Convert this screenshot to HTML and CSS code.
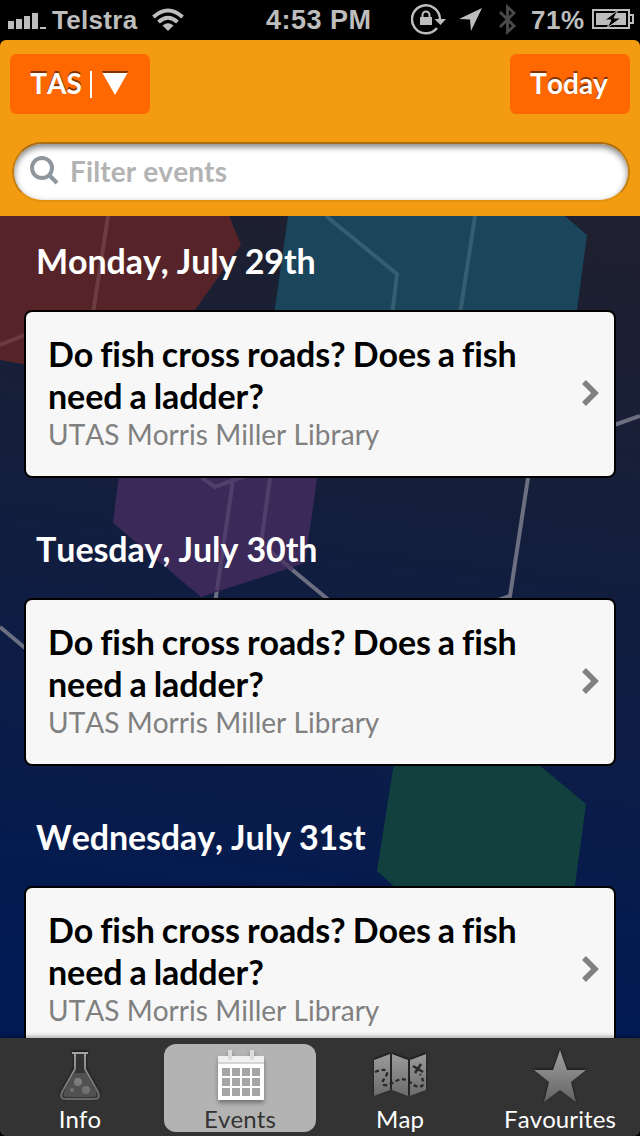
FILE: index.html
```
<!DOCTYPE html>
<html lang="en">
<head>
<meta charset="utf-8">
<title>Events</title>
<link rel="stylesheet" href="styles.css">
</head>
<body>
<div class="app">
  <div class="status">
    <svg class="signal" width="40" height="40" viewBox="0 0 40 40" fill="#bdbdbd"><path d="M0 21h6v8H0zM8 19h6v10H8zM16 16h6v13h-6zM24 13h6v16h-6zM32 27h6v2h-6z"/></svg>
    <span class="carrier">Telstra</span>
    <svg class="wifi" width="32" height="40" viewBox="0 0 32 40" fill="none" stroke="#bdbdbd" stroke-width="4"><path d="M1.500 17Q16 4 30.500 17M6.500 22Q16 13.500 25.500 22"/><path d="M16 31l-5.500-5.500q5.500-4.500 11 0z" fill="#bdbdbd" stroke="none"/></svg>
    <span class="clock">4:53 PM</span>
    <svg class="lock" width="36" height="40" viewBox="0 0 36 40"><path d="M26 28A14 14 0 1 1 29 19" fill="none" stroke="#bdbdbd" stroke-width="2.500"/><path d="M23.500 19H35l-5.500 6z" fill="#bdbdbd"/><path d="M9 17h12v8H9z" fill="#bdbdbd"/><path d="M11.500 17v-2a3.500 3.500 0 0 1 7 0v2" fill="none" stroke="#bdbdbd" stroke-width="2"/></svg>
    <svg class="arrow" width="24" height="40" viewBox="0 0 24 40"><path d="M0 19L23 8 12 31 11 19.500z" fill="#bdbdbd"/></svg>
    <svg class="bluetooth" width="18" height="40" viewBox="0 0 18 40"><path d="M1 12l14 14-6.500 6V7l6.500 6L1 27" fill="none" stroke="#4a4a4a" stroke-width="2.800"/></svg>
    <span class="percent">71%</span>
    <svg class="battery" width="42" height="40" viewBox="0 0 42 40"><path d="M1 10h36v18H1zM38 15h3v8h-3" fill="none" stroke="#bdbdbd" stroke-width="2"/><path d="M4 13h30v12H4z" fill="#bdbdbd"/><path d="M26 10L13 20h6l-4 8 14-10h-7z" fill="#000" stroke="#bdbdbd" stroke-width="1"/></svg>
  </div>

  <header class="header">
    <div class="toolbar">
      <button class="button region">TAS<span class="divider"></span><svg width="26" height="24" viewBox="0 0 26 24"><path d="M0 0h26L13 22z" fill="#803300"/><path d="M.5 2h25L13 24z" fill="#fff"/></svg></button>
      <button class="button today">Today</button>
    </div>
    <div class="search">
      <svg width="30" height="32" viewBox="0 0 30 32" fill="none" stroke="#8f979e" stroke-width="4"><circle cx="12" cy="13" r="10"/><path d="M19 20l8 8"/></svg>
      <span>Filter events</span>
    </div>
  </header>

  <main class="content">
    <svg class="backdrop" width="640" height="822" viewBox="0 216 640 822">
      <defs><linearGradient id="night" x1=".55" y1="0" x2=".45" y2="1"><stop offset="0" stop-color="#1e202f"/><stop offset=".35" stop-color="#141e3c"/><stop offset="1" stop-color="#001a55"/></linearGradient></defs>
      <path d="M0 216h640v822H0z" fill="url(#night)"/>
      <g fill="none" stroke="#6b6f80" stroke-width="4">
        <path d="M600 430l40-14M528 478l-18 118-40 14M233 480l-19 130M261 544l75 62M0 627l50 42"/>
      </g>
      <path d="M0 216h229l12 29-46 65-55 75L0 360z" fill="#562428"/>
      <path d="M288 216h277l22 19-10 75-5 40H269z" fill="#1a455a"/>
      <path d="M122 450l-9 73 88 74 104-34 16-113z" fill="#3b2959"/>
      <path d="M396 750l-19 121 32 29h164l13-96-65-54z" fill="#11403f"/>
      <g fill="none" stroke-width="4">
        <path d="M108 216L92 320M0 345l40-16" stroke="#6c3c40"/>
        <path d="M326 216l71 58-6 50M475 216l-15 98" stroke="#365e70"/>
        <path d="M202 478l13 9 30-11M233 480l-16 110M270 478l-9 66 32 26" stroke="#513f6b"/>
      </g>
    </svg>
    <div class="list">
      <section class="day">
        <h2>Monday, July 29th</h2>
        <article class="card"><div><h3>Do fish cross roads? Does a fish need a ladder?</h3><p>UTAS Morris Miller Library</p></div><svg width="20" height="28" viewBox="0 0 20 28"><path d="M3 3l11 11L3 25" fill="none" stroke="#808080" stroke-width="5.500"/></svg></article>
      </section>
      <section class="day">
        <h2>Tuesday, July 30th</h2>
        <article class="card"><div><h3>Do fish cross roads? Does a fish need a ladder?</h3><p>UTAS Morris Miller Library</p></div><svg width="20" height="28" viewBox="0 0 20 28"><path d="M3 3l11 11L3 25" fill="none" stroke="#808080" stroke-width="5.500"/></svg></article>
      </section>
      <section class="day">
        <h2>Wednesday, July 31st</h2>
        <article class="card"><div><h3>Do fish cross roads? Does a fish need a ladder?</h3><p>UTAS Morris Miller Library</p></div><svg width="20" height="28" viewBox="0 0 20 28"><path d="M3 3l11 11L3 25" fill="none" stroke="#808080" stroke-width="5.500"/></svg></article>
      </section>
    </div>
  </main>

  <nav class="tabs">
    <a class="tab">
      <svg class="raised" width="60" height="60" viewBox="0 0 60 60"><defs><linearGradient id="metal" gradientUnits="userSpaceOnUse" x1="0" y1="4" x2="0" y2="56"><stop offset="0" stop-color="#a2a2a2"/><stop offset="1" stop-color="#666"/></linearGradient></defs><path d="M25 9v16L12 48q-3 7 4 7h28q7 0 4-7L35 25V9" fill="#333" stroke="url(#metal)" stroke-width="2"/><path d="M23.500 29h13L46 48q2 5-3 5H17q-5 0-3-5z" fill="#515151"/><path d="M22 9h16" stroke="#a2a2a2" stroke-width="2"/><g fill="url(#metal)"><circle cx="28" cy="38" r="4"/><circle cx="36" cy="46" r="4"/><circle cx="22" cy="46" r="2"/></g></svg>
      <span>Info</span>
    </a>
    <a class="tab active">
      <svg class="calendar" width="60" height="60" viewBox="0 0 60 60"><rect x="8" y="12" width="46" height="44" rx="1" fill="#fff"/><path d="M8 12h46v6H8z" fill="#f0f0f0"/><path d="M8 18h46v2H8z" fill="#d5d5d5"/><path d="M18 6h4v10h-4zM40 6h4v10h-4z" fill="#ddd"/><path d="M12 24h8v8h-8zm10 0h8v8h-8zm10 0h8v8h-8zm10 0h8v8h-8zM12 34h8v8h-8zm10 0h8v8h-8zm10 0h8v8h-8zm10 0h8v8h-8zM12 44h8v8h-8zm10 0h8v8h-8zm10 0h8v8h-8zm10 0h8v8h-8z" fill="#a5a5a5"/></svg>
      <span>Events</span>
    </a>
    <a class="tab">
      <svg class="raised" width="60" height="60" viewBox="0 0 60 60"><path d="M4 16l16-6v36L4 52zM22 10l16 6v36l-16-6zM40 16l16-6v36l-16 6z" fill="url(#metal)"/><path d="M5 28Q18 23 17 30C15 35 10 38 14 41C22 43 27 32 36 36C43 39 46 45 52 42Q55 38 50 30" fill="none" stroke="#292929" stroke-width="2.300" stroke-dasharray="4 2.700"/><path d="M43 22l10 6M51 20l-6 9" stroke="#292929" stroke-width="2.500"/></svg>
      <span>Map</span>
    </a>
    <a class="tab">
      <svg class="raised" width="60" height="60" viewBox="0 0 60 60"><path d="M30 6l7 20h19L41 38l5 20-16-12-16 12 5-20L4 26h19z" fill="url(#metal)"/></svg>
      <span>Favourites</span>
    </a>
  </nav>
</div>
</body>
</html>
```

FILE: styles.css
```
* { box-sizing: border-box; }
body { margin: 0; background: #000; font-family: Lato, "Liberation Sans", sans-serif; font-kerning: none; font-variant-ligatures: none; }
h2, h3, p { margin: 0; }
svg { display: block; flex: none; }
.app { width: 640px; height: 1136px; display: flex; flex-direction: column; overflow: hidden; }

.status { flex: none; height: 40px; display: flex; align-items: center; padding-left: 8px; color: #bdbdbd; font: bold 27px/40px "Liberation Sans", sans-serif; white-space: nowrap; }
.signal { width: 40px; }
.carrier { width: 104px; margin-left: 4px; font-size: 26px; letter-spacing: .3px; }
.wifi { margin-left: -4px; }
.clock { width: 145px; margin-left: 82px; letter-spacing: .5px; }
.arrow { margin-left: 12px; }
.bluetooth { margin-left: 16px; }
.percent { width: 61px; margin-left: 14px; font-size: 26px; letter-spacing: .6px; }

.header { flex: none; height: 176px; padding: 14px 10px 0; background: #f39c12; border-radius: 6px 6px 0 0; }
.toolbar { display: flex; justify-content: space-between; }
.button { display: flex; align-items: center; justify-content: center; height: 60px; padding: 0 2px 2px 0; border: 0; border-radius: 6px; background: #ff6700; color: #fff; font: 700 28px/58px Lato, sans-serif; font-kerning: none; text-shadow: 0 -2px 0 #803300; }
.region { width: 140px; }
.today { width: 120px; }
.divider { width: 2px; height: 27px; margin: 2px 10px 0 8px; background: #fff; }
.search { display: flex; align-items: center; gap: 10px; width: 618px; height: 60px; margin: 28px 0 0 2px; padding: 0 0 2px 16px; border: 2px solid; border-color: #a96d15 #c47e12 #e3930f; border-radius: 30px; background: #fff; box-shadow: inset 0 3px 6px rgba(0,0,0,.5); color: #b3b3b3; font-size: 28px; font-weight: 700; letter-spacing: .1px; }

.content { flex: none; position: relative; height: 822px; overflow: hidden; }
.backdrop { position: absolute; inset: 0; }
.list { position: relative; padding: 0 24px; }
.day { height: 288px; }
.day h2 { height: 94px; padding-left: 12px; color: #fff; font-size: 34px; line-height: 90px; font-weight: 700; letter-spacing: -.1px; }
.card { display: flex; align-items: center; justify-content: space-between; height: 168px; padding: 0 13px 2px 22px; border: 2px solid #000; border-radius: 8px; background: #f7f7f7; }
.card div { width: 500px; padding-bottom: 3px; }
.card h3 { color: #000; font-size: 34px; line-height: 42px; font-weight: 700; letter-spacing: -.1px; word-spacing: -1.1px; }
.card p { color: #808080; font-size: 28px; line-height: 34px; letter-spacing: .04px; }

.tabs { flex: none; display: grid; grid-template-columns: repeat(4, 1fr); grid-template-rows: 88px; height: 98px; padding: 6px 0 4px; background: #333; border-radius: 0 0 6px 6px; box-shadow: 0 -1px 5px rgba(0,0,0,.4); position: relative; }
.tab { display: flex; flex-direction: column; align-items: center; margin: 0 4px; border-radius: 12px; color: #fff; font-size: 24px; line-height: 30px; letter-spacing: .1px; }
.active { background: #b3b3b3; color: #333; }
.raised { filter: drop-shadow(0 -1px 1px #111); }
.calendar { filter: drop-shadow(0 3px 2px rgba(0,0,0,.35)); }
```
